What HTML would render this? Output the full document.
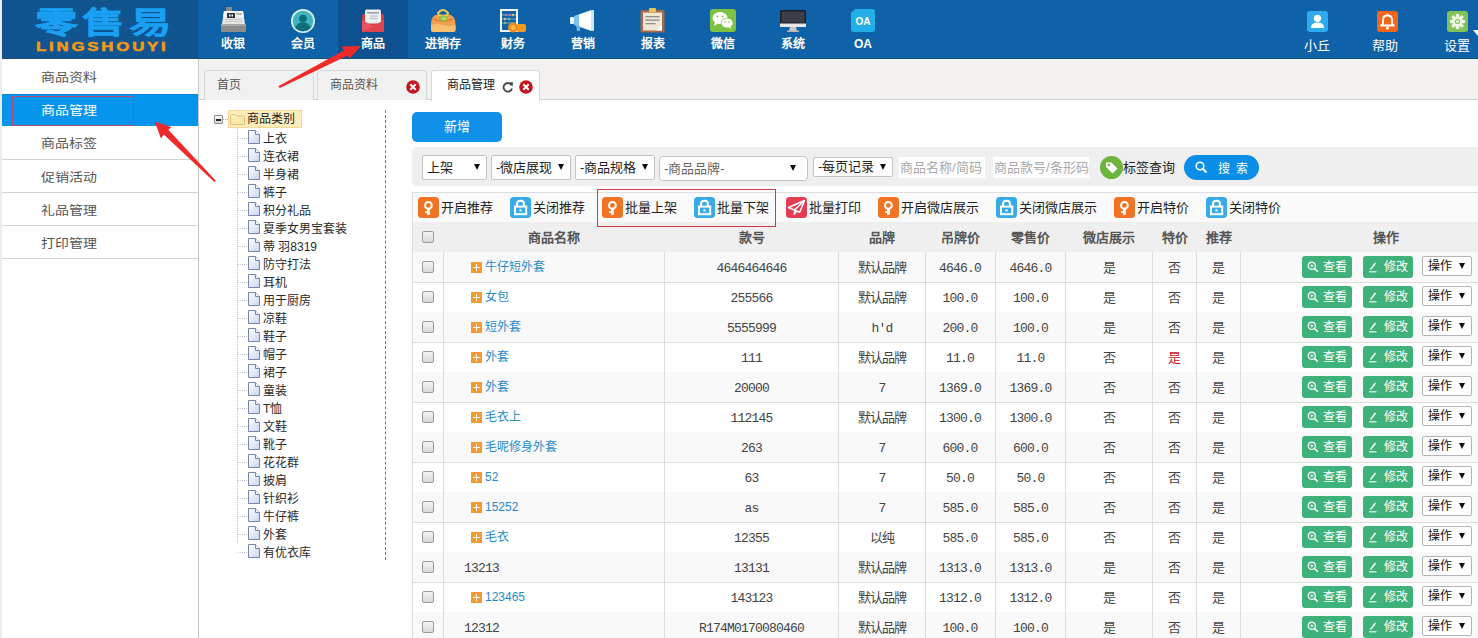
<!DOCTYPE html>
<html lang="zh-CN">
<head>
<meta charset="utf-8">
<style>
*{box-sizing:border-box;margin:0;padding:0}
html,body{width:1478px;height:638px;overflow:hidden;background:#fff;font-family:"Liberation Sans",sans-serif;font-size:13px;color:#333}
.a{position:absolute}
#hdr{position:absolute;left:2px;top:0;width:1476px;height:59px;background:#0f62a8;border-bottom:1px solid #1a4f7c}
#logo{position:absolute;left:2px;top:0;width:196px;height:58px;background:#10558f}
.nav{position:absolute;top:0;width:70px;height:58px;text-align:center;color:#fff;font-size:13px}
.nav .t{position:absolute;left:0;right:0;top:35.5px;line-height:17px;font-size:12px;font-weight:bold}
.nav svg{position:absolute}
.nav.on{background:#0e5190}
.rn{position:absolute;top:0;width:60px;height:57px;text-align:center;color:#fff;font-size:13px}
.rn .t{position:absolute;left:0;right:0;top:37px;line-height:17px}
.rn svg{position:absolute;left:19px;top:11px}
#side{position:absolute;left:0;top:59px;width:199px;height:579px;background:#fff;border-left:2px solid #ececec;border-right:1px solid #c9c9c9}
.mi{position:absolute;left:0;width:196px;height:33px;border-bottom:1px solid #d2d2d2;color:#555;font-size:14px;line-height:36px;padding-left:39px}
.mi.on{background:#0695ec;color:#fff;border-bottom:0}
#main{position:absolute;left:199px;top:58px;width:1279px;height:580px;background:#fff}
#tabbar{position:absolute;left:199px;top:59px;width:1279px;height:41px;background:linear-gradient(#e6fbfd,#eef3f6 1px,#f3f2f0 2px);border-bottom:1px solid #d0d0d0}
.tab{position:absolute;top:70px;height:30px;background:#f1f1f1;border:1px solid #d8d8d8;border-bottom:0;border-radius:3px 3px 0 0;color:#555;font-size:12px;line-height:28px}
.tab.on{background:#fff;color:#222;height:31px}
.cb{width:12px;height:12px;border:1px solid #9a9a9a;border-radius:2px;background:linear-gradient(#f4f4f4,#d8d8d8)}
.th{width:120px;text-align:center;font-size:13px;font-weight:bold;color:#555;line-height:18px;white-space:nowrap}
.td{width:160px;text-align:center;font-family:"Liberation Mono",serif;font-size:13px;letter-spacing:-0.8px;color:#444;line-height:16px;white-space:nowrap}
.lk{font-size:12px;color:#1f8bc9;line-height:18px;white-space:nowrap}
.pl{width:11px;height:11px;background:#f39b32}
.pl:before{content:"";position:absolute;left:2px;top:5px;width:7px;height:1px;background:#fff}
.pl:after{content:"";position:absolute;left:5px;top:2px;width:1px;height:7px;background:#fff}
.gb{width:50px;height:22px;background:#3fb27b;border-radius:3px;color:#fff;font-size:12px;line-height:22px;white-space:nowrap}
.op{width:50px;height:20px;background:#fff;border:1px solid #b5b5b5;border-radius:2px;font-size:12px;line-height:18px;color:#111;padding-left:5px;white-space:nowrap}
.st{display:inline-block;transform:scaleY(0.86)}
</style>
</head>
<body>
<div id="hdr"></div>
<div id="logo"></div>
<div class="a" style="left:0;top:0;width:2px;height:638px;background:#eeeeee"></div>
<div class="a" id="lg1" style="left:35px;top:5px;height:36px;color:#1aa0f2;font-weight:900;font-size:30px;line-height:36px;letter-spacing:3px;-webkit-text-stroke:0.3px #1aa0f2;white-space:nowrap;transform:scaleX(1.42);transform-origin:0 0">零售易</div>
<div class="a" id="lg2" style="left:36px;top:40px;height:14px;color:#f39a12;font-family:'Liberation Sans';font-weight:bold;font-size:12px;line-height:14px;letter-spacing:2px;-webkit-text-stroke:0.5px #f39a12;white-space:nowrap;transform:scaleX(1.4);transform-origin:0 0">LINGSHOUYI</div>

<!-- nav -->
<div class="nav" style="left:198px">
 <svg style="left:22px;top:7px" width="27" height="25" viewBox="0 0 27 25">
  <rect x="6" y="0" width="6" height="4" fill="#8a8a8a"/>
  <path d="M4 4 H23 L25 17 H2 Z" fill="#e6e6e6"/>
  <path d="M4 4 H23 L24 10 H3 Z" fill="#f4f4f4"/>
  <rect x="7" y="6" width="8" height="5" fill="#2b3340"/>
  <rect x="9" y="7.5" width="1.5" height="2" fill="#fff"/><rect x="11.5" y="7.5" width="1.5" height="2" fill="#fff"/>
  <rect x="16" y="6" width="6" height="2" fill="#bbb"/>
  <rect x="5" y="12" width="17" height="1" fill="#c9c9c9"/><rect x="5" y="14" width="17" height="1" fill="#c9c9c9"/>
  <rect x="1" y="17" width="25" height="8" fill="#8c8c8c"/>
  <rect x="1" y="17" width="25" height="2" fill="#a8a8a8"/>
 </svg>
 <div class="t">收银</div></div>
<div class="nav" style="left:268px">
 <svg style="left:23px;top:9px" width="24" height="24" viewBox="0 0 24 24">
  <circle cx="12" cy="12" r="12" fill="#d9f1f4"/>
  <circle cx="12" cy="12" r="10.3" fill="#41b4bf"/>
  <path d="M2.5 16 Q12 22 21.5 16 A10.3 10.3 0 0 1 2.5 16Z" fill="#2f9aa6"/>
  <circle cx="12" cy="9.5" r="3.8" fill="#0f6e7c"/>
  <path d="M4.5 19 Q6 14 10 13.5 L14 13.5 Q18 14 19.5 19 Q16 22.3 12 22.3 Q8 22.3 4.5 19Z" fill="#0f6e7c"/>
 </svg>
 <div class="t">会员</div></div>
<div class="nav on" style="left:338px">
 <svg style="left:23px;top:9px" width="24" height="23" viewBox="0 0 24 23">
  <path d="M1 7 Q1 5 3 5 H21 Q23 5 23 7 V21 Q23 23 21 23 H3 Q1 23 1 21Z" fill="#d63a45"/>
  <rect x="4" y="0.5" width="16" height="14" rx="1.5" fill="#eef0f2"/>
  <rect x="6" y="3" width="12" height="1.6" fill="#9aa3ad"/>
  <rect x="9" y="6.5" width="8" height="1.2" fill="#b8c0c8"/>
  <rect x="9" y="9" width="8" height="1.2" fill="#b8c0c8"/>
  <path d="M1 11 L12 17 L23 11 V21 Q23 23 21 23 H3 Q1 23 1 21Z" fill="#ef5360"/>
  <path d="M1 23 L23 12 V21 Q23 23 21 23Z" fill="#e0444f"/>
 </svg>
 <div class="t">商品</div></div>
<div class="nav" style="left:408px">
 <svg style="left:22px;top:8px" width="27" height="25" viewBox="0 0 27 25">
  <path d="M1 16 Q1 7 8 6.5 H18 Q25.5 7 25.5 16 V21.5 Q25.5 24 23 24 H3.5 Q1 24 1 21.5Z" fill="#f2a050"/>
  <path d="M1 17 Q7 15 13 17 Q19 19 25.5 17 V21.5 Q25.5 24 23 24 H3.5 Q1 24 1 21.5Z" fill="#f7c070"/>
  <path d="M3 11 Q13 15 23.5 11" stroke="#e8803e" stroke-width="2" fill="none"/>
  <path d="M8 5 Q13 -1 18 5 Q18 8 13 8 Q8 8 8 5Z" fill="none" stroke="#e8cc50" stroke-width="2"/>
  <path d="M9 9 Q13 6 18 9 Q17 14 13 14 Q9 13 9 9Z" fill="#8fbe45"/>
  <ellipse cx="14" cy="10.5" rx="2.5" ry="1.6" fill="#b6d86a"/>
 </svg>
 <div class="t">进销存</div></div>
<div class="nav" style="left:478px">
 <svg style="left:22px;top:9px" width="27" height="24" viewBox="0 0 27 24">
  <rect x="1" y="1" width="16" height="21" fill="none" stroke="#f4f6f8" stroke-width="2"/>
  <g fill="#e34a7a"><circle cx="6" cy="6" r="1.2"/><circle cx="10" cy="6" r="1.2"/></g>
  <g fill="#f3c93a"><circle cx="13" cy="6" r="1.2"/><circle cx="5" cy="10" r="1.2"/></g>
  <g fill="#66c35a"><circle cx="9" cy="10" r="1.2"/><circle cx="5" cy="14" r="1.2"/></g>
  <rect x="2" y="5.6" width="14" height="0.8" fill="#9bc"/><rect x="2" y="9.6" width="14" height="0.8" fill="#9bc"/><rect x="2" y="13.6" width="14" height="0.8" fill="#9bc"/>
  <rect x="17" y="15" width="9" height="8" rx="2" fill="#f39a1e"/>
  <circle cx="13" cy="18.5" r="5" fill="#f08a12"/>
  <circle cx="13" cy="18.5" r="2.5" fill="#f7b84a"/>
 </svg>
 <div class="t">财务</div></div>
<div class="nav" style="left:548px">
 <svg style="left:22px;top:10px" width="25" height="22" viewBox="0 0 25 22">
  <rect x="0" y="7" width="4" height="7" rx="1" fill="#eaf6fc"/>
  <path d="M4 6 L21 0 V21 L4 15Z" fill="#7cc4ec"/>
  <path d="M9 4.5 L21 0.5 V20.5 L9 16.5Z" fill="#ffffff"/>
  <rect x="21" y="0" width="3" height="21" rx="1" fill="#cbe8f7"/>
  <path d="M6 15 L10 16 L10 21 L7 21Z" fill="#6bb8e4"/>
 </svg>
 <div class="t">营销</div></div>
<div class="nav" style="left:618px">
 <svg style="left:22px;top:8px" width="25" height="25" viewBox="0 0 25 25">
  <rect x="0.5" y="2" width="24" height="22.5" rx="1.5" fill="#a8684a"/>
  <rect x="3" y="4.5" width="19" height="18" fill="#efe6d6"/>
  <rect x="9" y="0" width="7" height="4" rx="1" fill="#e8c25a"/>
  <rect x="5.5" y="8" width="14" height="1.3" fill="#8d8d8d"/>
  <rect x="5.5" y="11.5" width="14" height="1.3" fill="#8d8d8d"/>
  <rect x="5.5" y="15" width="10" height="1.3" fill="#8d8d8d"/>
  <path d="M16 22.5 L22 16.5 V22.5Z" fill="#fff"/>
 </svg>
 <div class="t">报表</div></div>
<div class="nav" style="left:688px">
 <svg style="left:22px;top:9px" width="26" height="23" viewBox="0 0 26 23">
  <rect x="0" y="0" width="26" height="23" rx="3" fill="#7dc243"/>
  <ellipse cx="10" cy="9" rx="7.5" ry="6" fill="#fff"/>
  <path d="M5 13 L4 17 L8 14.5Z" fill="#fff"/>
  <ellipse cx="17" cy="14" rx="6.3" ry="5.2" fill="#7dc243"/>
  <ellipse cx="17" cy="14" rx="5.6" ry="4.6" fill="#fff"/>
  <path d="M20 17.5 L22 20 L18.5 18.5Z" fill="#fff"/>
  <g fill="#7dc243"><circle cx="7.5" cy="7.5" r="1"/><circle cx="12.5" cy="7.5" r="1"/><circle cx="15" cy="13" r="0.8"/><circle cx="19" cy="13" r="0.8"/></g>
 </svg>
 <div class="t">微信</div></div>
<div class="nav" style="left:758px">
 <svg style="left:22px;top:10px" width="26" height="22" viewBox="0 0 26 22">
  <rect x="0" y="0" width="26" height="17" rx="1" fill="#1b1f26"/>
  <rect x="1.5" y="1.5" width="23" height="11" fill="#3a3f4a"/>
  <rect x="0" y="13.5" width="26" height="3.5" fill="#e8e8e8"/>
  <path d="M10 17 H16 L17 21 H9Z" fill="#c9c9c9"/>
  <rect x="7" y="20.5" width="12" height="1.5" fill="#b5b5b5"/>
 </svg>
 <div class="t">系统</div></div>
<div class="nav" style="left:828px">
 <svg style="left:23px;top:9px" width="24" height="23" viewBox="0 0 24 23">
  <path d="M4 0 H21 Q24 0 24 3 V20 Q24 23 21 23 H3 Q0 23 0 20 V4Z" fill="#22afe9"/>
  <text x="12" y="15.5" text-anchor="middle" font-family="Liberation Sans" font-weight="bold" font-size="10" fill="#fff">OA</text>
 </svg>
 <div class="t" style="font-family:'Liberation Sans'">OA</div></div>

<div class="rn" style="left:1288px">
 <svg width="21" height="21" viewBox="0 0 21 21"><rect width="21" height="21" rx="3" fill="#2fa9f0"/><circle cx="10.5" cy="7.3" r="3.6" fill="#fff"/><path d="M4 17 Q4 11.5 10.5 11.5 Q17 11.5 17 17Z" fill="#fff"/></svg>
 <div class="t" style="left:-1px;right:1px">小丘</div></div>
<div class="rn" style="left:1358px">
 <svg width="21" height="21" viewBox="0 0 21 21"><rect width="21" height="21" rx="3" fill="#f4661c"/><path d="M6 13 V9 Q6 4.5 10.5 4.5 Q15 4.5 15 9 V13 L17 14.5 H4 L6 13Z" fill="none" stroke="#fff" stroke-width="1.8" stroke-linejoin="round"/><circle cx="10.5" cy="17" r="1.5" fill="#fff"/><rect x="9.8" y="2.5" width="1.4" height="2" fill="#fff"/></svg>
 <div class="t" style="left:-3px;right:3px">帮助</div></div>
<div class="rn" style="left:1428px">
 <svg width="21" height="21" viewBox="0 0 21 21"><rect width="21" height="21" rx="3" fill="#80c35b"/>
 <path d="M9.2 3 H11.8 L12.3 5.3 L14.2 6.1 L16.2 4.8 L18 6.6 L16.7 8.6 L17.5 10.5 L19.8 11 V13.6 L17.5 14.1" fill="none"/>
 <g transform="translate(10.5 10.5)" fill="#eef6e6"><rect x="-1.6" y="-7.5" width="3.2" height="15"/><rect x="-1.6" y="-7.5" width="3.2" height="15" transform="rotate(45)"/><rect x="-1.6" y="-7.5" width="3.2" height="15" transform="rotate(90)"/><rect x="-1.6" y="-7.5" width="3.2" height="15" transform="rotate(135)"/><circle r="5.3"/></g>
 <circle cx="10.5" cy="10.5" r="2.6" fill="#80c35b"/><circle cx="10.5" cy="10.5" r="1.5" fill="#eef6e6"/></svg>
 <div class="t" style="left:-1px;right:1px">设置</div></div>
<div class="a" style="left:1473px;top:30px;width:0;height:0;border-left:5px solid transparent;border-right:5px solid transparent;border-top:6px solid #fff"></div>
<div id="side">
  <div class="mi" style="top:0;height:35px;line-height:39px;border-bottom:0"><span class="st">商品资料</span></div>
  <div class="mi on" style="top:35px;height:32px;line-height:32px;border-top:1px solid #0d86d8"><span class="st">商品管理</span></div>
  <div class="mi" style="top:67px;height:34px;line-height:37px"><span class="st">商品标签</span></div>
  <div class="mi" style="top:101px"><span class="st">促销活动</span></div>
  <div class="mi" style="top:134px"><span class="st">礼品管理</span></div>
  <div class="mi" style="top:167px"><span class="st">打印管理</span></div>
</div>
<div class="a" style="left:12px;top:96px;width:122px;height:30px;border:1px solid #b5487a"></div>

<div id="tabbar"></div>
<div class="tab" style="left:204px;width:110px;padding-left:12px">首页</div>
<div class="tab" style="left:317px;width:110px;padding-left:12px">商品资料
  <svg class="a" style="left:88px;top:9px" width="14" height="14" viewBox="0 0 14 14"><circle cx="7" cy="7" r="6.8" fill="#c4161f"/><path d="M4.3 4.3 L9.7 9.7 M9.7 4.3 L4.3 9.7" stroke="#fff" stroke-width="2"/></svg>
</div>
<div class="tab on" style="left:431px;width:109px;padding-left:15px">商品管理
  <svg class="a" style="left:70px;top:10px" width="12" height="12" viewBox="0 0 12 12"><path d="M9.6 4.2 A4.3 4.3 0 1 0 10 7.5" fill="none" stroke="#444" stroke-width="1.8"/><path d="M7.2 1.2 L11.2 1.4 L10.4 5.6Z" fill="#444"/></svg>
  <svg class="a" style="left:87px;top:9px" width="14" height="14" viewBox="0 0 14 14"><circle cx="7" cy="7" r="6.8" fill="#c4161f"/><path d="M4.3 4.3 L9.7 9.7 M9.7 4.3 L4.3 9.7" stroke="#fff" stroke-width="2"/></svg>
</div>

<!-- tree -->
<div class="a" style="left:385px;top:110px;width:0;height:450px;border-left:1px dashed #777"></div>
<div class="a" style="left:214px;top:115px;width:9px;height:9px;border:1px solid #8a8a8a;background:linear-gradient(#fff,#d8d8d8);border-radius:1px"><div class="a" style="left:1px;top:3px;width:5px;height:2px;background:#222"></div></div>
<div class="a" style="left:223px;top:119px;width:5px;height:0;border-top:1px dotted #aaa"></div>
<div class="a" style="left:228px;top:110px;width:74px;height:18px;background:#feecbb;border:1px solid #f5d896"></div>
<svg class="a" style="left:230px;top:114px" width="15" height="11" viewBox="0 0 15 11"><path d="M0.5 1.5 Q0.5 0.5 1.5 0.5 H5 L6 2 H13.5 Q14.5 2 14.5 3 V10.5 H0.5Z" fill="#fdf3c4" stroke="#dcc27a" stroke-width="1"/><rect x="1" y="4" width="13" height="6" fill="#fbe7a6"/></svg>
<div class="a tree" style="left:247px;top:111px;font-size:12px;line-height:16px;color:#222">商品类别</div>
<div class="a" style="left:237px;top:128px;width:0;height:415px;border-left:1px dotted #c4c4c4"></div>
<div id="tree"></div>
<div class="a" style="left:238px;top:138px;width:9px;height:0;border-top:1px dotted #c4c4c4"></div>
<svg class="a" style="left:248px;top:130px" width="12" height="14" viewBox="0 0 12 14"><defs><linearGradient id="fg" x1="0" y1="0" x2="1" y2="1"><stop offset="0" stop-color="#ffffff"/><stop offset="1" stop-color="#c9d6f0"/></linearGradient></defs><path d="M0.5 0.5 H7.5 L11.5 4.5 V13.5 H0.5Z" fill="url(#fg)" stroke="#7486b0"/><path d="M7.5 0.5 V4.5 H11.5" fill="#fff" stroke="#7486b0"/></svg>
<div class="a" style="left:263px;top:130px;font-size:12px;line-height:18px;color:#2a2a2a;white-space:nowrap">上衣</div>
<div class="a" style="left:238px;top:156px;width:9px;height:0;border-top:1px dotted #c4c4c4"></div>
<svg class="a" style="left:248px;top:148px" width="12" height="14" viewBox="0 0 12 14"><defs><linearGradient id="fg" x1="0" y1="0" x2="1" y2="1"><stop offset="0" stop-color="#ffffff"/><stop offset="1" stop-color="#c9d6f0"/></linearGradient></defs><path d="M0.5 0.5 H7.5 L11.5 4.5 V13.5 H0.5Z" fill="url(#fg)" stroke="#7486b0"/><path d="M7.5 0.5 V4.5 H11.5" fill="#fff" stroke="#7486b0"/></svg>
<div class="a" style="left:263px;top:148px;font-size:12px;line-height:18px;color:#2a2a2a;white-space:nowrap">连衣裙</div>
<div class="a" style="left:238px;top:174px;width:9px;height:0;border-top:1px dotted #c4c4c4"></div>
<svg class="a" style="left:248px;top:166px" width="12" height="14" viewBox="0 0 12 14"><defs><linearGradient id="fg" x1="0" y1="0" x2="1" y2="1"><stop offset="0" stop-color="#ffffff"/><stop offset="1" stop-color="#c9d6f0"/></linearGradient></defs><path d="M0.5 0.5 H7.5 L11.5 4.5 V13.5 H0.5Z" fill="url(#fg)" stroke="#7486b0"/><path d="M7.5 0.5 V4.5 H11.5" fill="#fff" stroke="#7486b0"/></svg>
<div class="a" style="left:263px;top:166px;font-size:12px;line-height:18px;color:#2a2a2a;white-space:nowrap">半身裙</div>
<div class="a" style="left:238px;top:192px;width:9px;height:0;border-top:1px dotted #c4c4c4"></div>
<svg class="a" style="left:248px;top:184px" width="12" height="14" viewBox="0 0 12 14"><defs><linearGradient id="fg" x1="0" y1="0" x2="1" y2="1"><stop offset="0" stop-color="#ffffff"/><stop offset="1" stop-color="#c9d6f0"/></linearGradient></defs><path d="M0.5 0.5 H7.5 L11.5 4.5 V13.5 H0.5Z" fill="url(#fg)" stroke="#7486b0"/><path d="M7.5 0.5 V4.5 H11.5" fill="#fff" stroke="#7486b0"/></svg>
<div class="a" style="left:263px;top:184px;font-size:12px;line-height:18px;color:#2a2a2a;white-space:nowrap">裤子</div>
<div class="a" style="left:238px;top:210px;width:9px;height:0;border-top:1px dotted #c4c4c4"></div>
<svg class="a" style="left:248px;top:202px" width="12" height="14" viewBox="0 0 12 14"><defs><linearGradient id="fg" x1="0" y1="0" x2="1" y2="1"><stop offset="0" stop-color="#ffffff"/><stop offset="1" stop-color="#c9d6f0"/></linearGradient></defs><path d="M0.5 0.5 H7.5 L11.5 4.5 V13.5 H0.5Z" fill="url(#fg)" stroke="#7486b0"/><path d="M7.5 0.5 V4.5 H11.5" fill="#fff" stroke="#7486b0"/></svg>
<div class="a" style="left:263px;top:202px;font-size:12px;line-height:18px;color:#2a2a2a;white-space:nowrap">积分礼品</div>
<div class="a" style="left:238px;top:228px;width:9px;height:0;border-top:1px dotted #c4c4c4"></div>
<svg class="a" style="left:248px;top:220px" width="12" height="14" viewBox="0 0 12 14"><defs><linearGradient id="fg" x1="0" y1="0" x2="1" y2="1"><stop offset="0" stop-color="#ffffff"/><stop offset="1" stop-color="#c9d6f0"/></linearGradient></defs><path d="M0.5 0.5 H7.5 L11.5 4.5 V13.5 H0.5Z" fill="url(#fg)" stroke="#7486b0"/><path d="M7.5 0.5 V4.5 H11.5" fill="#fff" stroke="#7486b0"/></svg>
<div class="a" style="left:263px;top:220px;font-size:12px;line-height:18px;color:#2a2a2a;white-space:nowrap">夏季女男宝套装</div>
<div class="a" style="left:238px;top:246px;width:9px;height:0;border-top:1px dotted #c4c4c4"></div>
<svg class="a" style="left:248px;top:238px" width="12" height="14" viewBox="0 0 12 14"><defs><linearGradient id="fg" x1="0" y1="0" x2="1" y2="1"><stop offset="0" stop-color="#ffffff"/><stop offset="1" stop-color="#c9d6f0"/></linearGradient></defs><path d="M0.5 0.5 H7.5 L11.5 4.5 V13.5 H0.5Z" fill="url(#fg)" stroke="#7486b0"/><path d="M7.5 0.5 V4.5 H11.5" fill="#fff" stroke="#7486b0"/></svg>
<div class="a" style="left:263px;top:238px;font-size:12px;line-height:18px;color:#2a2a2a;white-space:nowrap">蒂 羽8319</div>
<div class="a" style="left:238px;top:264px;width:9px;height:0;border-top:1px dotted #c4c4c4"></div>
<svg class="a" style="left:248px;top:256px" width="12" height="14" viewBox="0 0 12 14"><defs><linearGradient id="fg" x1="0" y1="0" x2="1" y2="1"><stop offset="0" stop-color="#ffffff"/><stop offset="1" stop-color="#c9d6f0"/></linearGradient></defs><path d="M0.5 0.5 H7.5 L11.5 4.5 V13.5 H0.5Z" fill="url(#fg)" stroke="#7486b0"/><path d="M7.5 0.5 V4.5 H11.5" fill="#fff" stroke="#7486b0"/></svg>
<div class="a" style="left:263px;top:256px;font-size:12px;line-height:18px;color:#2a2a2a;white-space:nowrap">防守打法</div>
<div class="a" style="left:238px;top:282px;width:9px;height:0;border-top:1px dotted #c4c4c4"></div>
<svg class="a" style="left:248px;top:274px" width="12" height="14" viewBox="0 0 12 14"><defs><linearGradient id="fg" x1="0" y1="0" x2="1" y2="1"><stop offset="0" stop-color="#ffffff"/><stop offset="1" stop-color="#c9d6f0"/></linearGradient></defs><path d="M0.5 0.5 H7.5 L11.5 4.5 V13.5 H0.5Z" fill="url(#fg)" stroke="#7486b0"/><path d="M7.5 0.5 V4.5 H11.5" fill="#fff" stroke="#7486b0"/></svg>
<div class="a" style="left:263px;top:274px;font-size:12px;line-height:18px;color:#2a2a2a;white-space:nowrap">耳机</div>
<div class="a" style="left:238px;top:300px;width:9px;height:0;border-top:1px dotted #c4c4c4"></div>
<svg class="a" style="left:248px;top:292px" width="12" height="14" viewBox="0 0 12 14"><defs><linearGradient id="fg" x1="0" y1="0" x2="1" y2="1"><stop offset="0" stop-color="#ffffff"/><stop offset="1" stop-color="#c9d6f0"/></linearGradient></defs><path d="M0.5 0.5 H7.5 L11.5 4.5 V13.5 H0.5Z" fill="url(#fg)" stroke="#7486b0"/><path d="M7.5 0.5 V4.5 H11.5" fill="#fff" stroke="#7486b0"/></svg>
<div class="a" style="left:263px;top:292px;font-size:12px;line-height:18px;color:#2a2a2a;white-space:nowrap">用于厨房</div>
<div class="a" style="left:238px;top:318px;width:9px;height:0;border-top:1px dotted #c4c4c4"></div>
<svg class="a" style="left:248px;top:310px" width="12" height="14" viewBox="0 0 12 14"><defs><linearGradient id="fg" x1="0" y1="0" x2="1" y2="1"><stop offset="0" stop-color="#ffffff"/><stop offset="1" stop-color="#c9d6f0"/></linearGradient></defs><path d="M0.5 0.5 H7.5 L11.5 4.5 V13.5 H0.5Z" fill="url(#fg)" stroke="#7486b0"/><path d="M7.5 0.5 V4.5 H11.5" fill="#fff" stroke="#7486b0"/></svg>
<div class="a" style="left:263px;top:310px;font-size:12px;line-height:18px;color:#2a2a2a;white-space:nowrap">凉鞋</div>
<div class="a" style="left:238px;top:336px;width:9px;height:0;border-top:1px dotted #c4c4c4"></div>
<svg class="a" style="left:248px;top:328px" width="12" height="14" viewBox="0 0 12 14"><defs><linearGradient id="fg" x1="0" y1="0" x2="1" y2="1"><stop offset="0" stop-color="#ffffff"/><stop offset="1" stop-color="#c9d6f0"/></linearGradient></defs><path d="M0.5 0.5 H7.5 L11.5 4.5 V13.5 H0.5Z" fill="url(#fg)" stroke="#7486b0"/><path d="M7.5 0.5 V4.5 H11.5" fill="#fff" stroke="#7486b0"/></svg>
<div class="a" style="left:263px;top:328px;font-size:12px;line-height:18px;color:#2a2a2a;white-space:nowrap">鞋子</div>
<div class="a" style="left:238px;top:354px;width:9px;height:0;border-top:1px dotted #c4c4c4"></div>
<svg class="a" style="left:248px;top:346px" width="12" height="14" viewBox="0 0 12 14"><defs><linearGradient id="fg" x1="0" y1="0" x2="1" y2="1"><stop offset="0" stop-color="#ffffff"/><stop offset="1" stop-color="#c9d6f0"/></linearGradient></defs><path d="M0.5 0.5 H7.5 L11.5 4.5 V13.5 H0.5Z" fill="url(#fg)" stroke="#7486b0"/><path d="M7.5 0.5 V4.5 H11.5" fill="#fff" stroke="#7486b0"/></svg>
<div class="a" style="left:263px;top:346px;font-size:12px;line-height:18px;color:#2a2a2a;white-space:nowrap">帽子</div>
<div class="a" style="left:238px;top:372px;width:9px;height:0;border-top:1px dotted #c4c4c4"></div>
<svg class="a" style="left:248px;top:364px" width="12" height="14" viewBox="0 0 12 14"><defs><linearGradient id="fg" x1="0" y1="0" x2="1" y2="1"><stop offset="0" stop-color="#ffffff"/><stop offset="1" stop-color="#c9d6f0"/></linearGradient></defs><path d="M0.5 0.5 H7.5 L11.5 4.5 V13.5 H0.5Z" fill="url(#fg)" stroke="#7486b0"/><path d="M7.5 0.5 V4.5 H11.5" fill="#fff" stroke="#7486b0"/></svg>
<div class="a" style="left:263px;top:364px;font-size:12px;line-height:18px;color:#2a2a2a;white-space:nowrap">裙子</div>
<div class="a" style="left:238px;top:390px;width:9px;height:0;border-top:1px dotted #c4c4c4"></div>
<svg class="a" style="left:248px;top:382px" width="12" height="14" viewBox="0 0 12 14"><defs><linearGradient id="fg" x1="0" y1="0" x2="1" y2="1"><stop offset="0" stop-color="#ffffff"/><stop offset="1" stop-color="#c9d6f0"/></linearGradient></defs><path d="M0.5 0.5 H7.5 L11.5 4.5 V13.5 H0.5Z" fill="url(#fg)" stroke="#7486b0"/><path d="M7.5 0.5 V4.5 H11.5" fill="#fff" stroke="#7486b0"/></svg>
<div class="a" style="left:263px;top:382px;font-size:12px;line-height:18px;color:#2a2a2a;white-space:nowrap">童装</div>
<div class="a" style="left:238px;top:408px;width:9px;height:0;border-top:1px dotted #c4c4c4"></div>
<svg class="a" style="left:248px;top:400px" width="12" height="14" viewBox="0 0 12 14"><defs><linearGradient id="fg" x1="0" y1="0" x2="1" y2="1"><stop offset="0" stop-color="#ffffff"/><stop offset="1" stop-color="#c9d6f0"/></linearGradient></defs><path d="M0.5 0.5 H7.5 L11.5 4.5 V13.5 H0.5Z" fill="url(#fg)" stroke="#7486b0"/><path d="M7.5 0.5 V4.5 H11.5" fill="#fff" stroke="#7486b0"/></svg>
<div class="a" style="left:263px;top:400px;font-size:12px;line-height:18px;color:#2a2a2a;white-space:nowrap">T恤</div>
<div class="a" style="left:238px;top:426px;width:9px;height:0;border-top:1px dotted #c4c4c4"></div>
<svg class="a" style="left:248px;top:418px" width="12" height="14" viewBox="0 0 12 14"><defs><linearGradient id="fg" x1="0" y1="0" x2="1" y2="1"><stop offset="0" stop-color="#ffffff"/><stop offset="1" stop-color="#c9d6f0"/></linearGradient></defs><path d="M0.5 0.5 H7.5 L11.5 4.5 V13.5 H0.5Z" fill="url(#fg)" stroke="#7486b0"/><path d="M7.5 0.5 V4.5 H11.5" fill="#fff" stroke="#7486b0"/></svg>
<div class="a" style="left:263px;top:418px;font-size:12px;line-height:18px;color:#2a2a2a;white-space:nowrap">文鞋</div>
<div class="a" style="left:238px;top:444px;width:9px;height:0;border-top:1px dotted #c4c4c4"></div>
<svg class="a" style="left:248px;top:436px" width="12" height="14" viewBox="0 0 12 14"><defs><linearGradient id="fg" x1="0" y1="0" x2="1" y2="1"><stop offset="0" stop-color="#ffffff"/><stop offset="1" stop-color="#c9d6f0"/></linearGradient></defs><path d="M0.5 0.5 H7.5 L11.5 4.5 V13.5 H0.5Z" fill="url(#fg)" stroke="#7486b0"/><path d="M7.5 0.5 V4.5 H11.5" fill="#fff" stroke="#7486b0"/></svg>
<div class="a" style="left:263px;top:436px;font-size:12px;line-height:18px;color:#2a2a2a;white-space:nowrap">靴子</div>
<div class="a" style="left:238px;top:462px;width:9px;height:0;border-top:1px dotted #c4c4c4"></div>
<svg class="a" style="left:248px;top:454px" width="12" height="14" viewBox="0 0 12 14"><defs><linearGradient id="fg" x1="0" y1="0" x2="1" y2="1"><stop offset="0" stop-color="#ffffff"/><stop offset="1" stop-color="#c9d6f0"/></linearGradient></defs><path d="M0.5 0.5 H7.5 L11.5 4.5 V13.5 H0.5Z" fill="url(#fg)" stroke="#7486b0"/><path d="M7.5 0.5 V4.5 H11.5" fill="#fff" stroke="#7486b0"/></svg>
<div class="a" style="left:263px;top:454px;font-size:12px;line-height:18px;color:#2a2a2a;white-space:nowrap">花花群</div>
<div class="a" style="left:238px;top:480px;width:9px;height:0;border-top:1px dotted #c4c4c4"></div>
<svg class="a" style="left:248px;top:472px" width="12" height="14" viewBox="0 0 12 14"><defs><linearGradient id="fg" x1="0" y1="0" x2="1" y2="1"><stop offset="0" stop-color="#ffffff"/><stop offset="1" stop-color="#c9d6f0"/></linearGradient></defs><path d="M0.5 0.5 H7.5 L11.5 4.5 V13.5 H0.5Z" fill="url(#fg)" stroke="#7486b0"/><path d="M7.5 0.5 V4.5 H11.5" fill="#fff" stroke="#7486b0"/></svg>
<div class="a" style="left:263px;top:472px;font-size:12px;line-height:18px;color:#2a2a2a;white-space:nowrap">披肩</div>
<div class="a" style="left:238px;top:498px;width:9px;height:0;border-top:1px dotted #c4c4c4"></div>
<svg class="a" style="left:248px;top:490px" width="12" height="14" viewBox="0 0 12 14"><defs><linearGradient id="fg" x1="0" y1="0" x2="1" y2="1"><stop offset="0" stop-color="#ffffff"/><stop offset="1" stop-color="#c9d6f0"/></linearGradient></defs><path d="M0.5 0.5 H7.5 L11.5 4.5 V13.5 H0.5Z" fill="url(#fg)" stroke="#7486b0"/><path d="M7.5 0.5 V4.5 H11.5" fill="#fff" stroke="#7486b0"/></svg>
<div class="a" style="left:263px;top:490px;font-size:12px;line-height:18px;color:#2a2a2a;white-space:nowrap">针织衫</div>
<div class="a" style="left:238px;top:516px;width:9px;height:0;border-top:1px dotted #c4c4c4"></div>
<svg class="a" style="left:248px;top:508px" width="12" height="14" viewBox="0 0 12 14"><defs><linearGradient id="fg" x1="0" y1="0" x2="1" y2="1"><stop offset="0" stop-color="#ffffff"/><stop offset="1" stop-color="#c9d6f0"/></linearGradient></defs><path d="M0.5 0.5 H7.5 L11.5 4.5 V13.5 H0.5Z" fill="url(#fg)" stroke="#7486b0"/><path d="M7.5 0.5 V4.5 H11.5" fill="#fff" stroke="#7486b0"/></svg>
<div class="a" style="left:263px;top:508px;font-size:12px;line-height:18px;color:#2a2a2a;white-space:nowrap">牛仔裤</div>
<div class="a" style="left:238px;top:534px;width:9px;height:0;border-top:1px dotted #c4c4c4"></div>
<svg class="a" style="left:248px;top:526px" width="12" height="14" viewBox="0 0 12 14"><defs><linearGradient id="fg" x1="0" y1="0" x2="1" y2="1"><stop offset="0" stop-color="#ffffff"/><stop offset="1" stop-color="#c9d6f0"/></linearGradient></defs><path d="M0.5 0.5 H7.5 L11.5 4.5 V13.5 H0.5Z" fill="url(#fg)" stroke="#7486b0"/><path d="M7.5 0.5 V4.5 H11.5" fill="#fff" stroke="#7486b0"/></svg>
<div class="a" style="left:263px;top:526px;font-size:12px;line-height:18px;color:#2a2a2a;white-space:nowrap">外套</div>
<div class="a" style="left:238px;top:552px;width:9px;height:0;border-top:1px dotted #c4c4c4"></div>
<svg class="a" style="left:248px;top:544px" width="12" height="14" viewBox="0 0 12 14"><defs><linearGradient id="fg" x1="0" y1="0" x2="1" y2="1"><stop offset="0" stop-color="#ffffff"/><stop offset="1" stop-color="#c9d6f0"/></linearGradient></defs><path d="M0.5 0.5 H7.5 L11.5 4.5 V13.5 H0.5Z" fill="url(#fg)" stroke="#7486b0"/><path d="M7.5 0.5 V4.5 H11.5" fill="#fff" stroke="#7486b0"/></svg>
<div class="a" style="left:263px;top:544px;font-size:12px;line-height:18px;color:#2a2a2a;white-space:nowrap">有优衣库</div>
<div class="a" style="left:412px;top:112px;width:90px;height:30px;background:#0f91e9;border-radius:5px;color:#fff;font-size:13px;line-height:30px;text-align:center">新增</div>
<div class="a" style="left:412px;top:147px;width:1066px;height:39px;background:#efefef;border-radius:5px 0 0 5px"></div>
<div class="a" style="left:422px;top:155px;width:65px;height:25px;background:#fff;border:1px solid #c4c4c4;border-radius:2px;font-size:13px;line-height:23px;color:#222;padding-left:4px;white-space:nowrap">上架<div class="a" style="left:51px;top:8px;width:0;height:0;border-left:3.5px solid transparent;border-right:3.5px solid transparent;border-top:6px solid #111"></div></div>
<div class="a" style="left:491px;top:155px;width:80px;height:25px;background:#fff;border:1px solid #c4c4c4;border-radius:2px;font-size:13px;line-height:23px;color:#222;padding-left:4px;white-space:nowrap">-微店展现<div class="a" style="left:66px;top:8px;width:0;height:0;border-left:3.5px solid transparent;border-right:3.5px solid transparent;border-top:6px solid #111"></div></div>
<div class="a" style="left:575px;top:155px;width:80px;height:25px;background:#fff;border:1px solid #c4c4c4;border-radius:2px;font-size:13px;line-height:23px;color:#222;padding-left:4px;white-space:nowrap">-商品规格<div class="a" style="left:66px;top:8px;width:0;height:0;border-left:3.5px solid transparent;border-right:3.5px solid transparent;border-top:6px solid #111"></div></div>
<div class="a" style="left:659px;top:156px;width:149px;height:25px;background:#fff;border:1px solid #c4c4c4;border-radius:4px;font-size:13px;line-height:23px;color:#666;padding-left:4px;white-space:nowrap">-商品品牌-<div class="a" style="left:130px;top:8px;width:0;height:0;border-left:3.5px solid transparent;border-right:3.5px solid transparent;border-top:6px solid #111"></div></div>
<div class="a" style="left:813px;top:157px;width:80px;height:20px;background:#fff;border:1px solid #c4c4c4;border-radius:2px;font-size:13px;line-height:18px;color:#222;padding-left:4px;white-space:nowrap">-每页记录<div class="a" style="left:66px;top:6px;width:0;height:0;border-left:3.5px solid transparent;border-right:3.5px solid transparent;border-top:6px solid #111"></div></div>
<div class="a" style="left:898px;top:156px;width:88px;height:23px;background:#fff;border:1px solid #f0f0f0;font-size:13px;line-height:22px;color:#a9a9a9;padding-left:1px;white-space:nowrap">商品名称/简码</div>
<div class="a" style="left:992px;top:156px;width:98px;height:23px;background:#fff;border:1px solid #f0f0f0;font-size:13px;line-height:22px;color:#a9a9a9;padding-left:1px;white-space:nowrap">商品款号/条形码</div>
<svg class="a" style="left:1100px;top:156px" width="23" height="23" viewBox="0 0 23 23"><circle cx="11.5" cy="11.5" r="11.5" fill="#6db43f"/><path d="M6 6.5 H11.5 L17.5 12.5 L12.5 17.5 L6 11Z" fill="#fff"/><circle cx="8.8" cy="9" r="1.3" fill="#6db43f"/></svg>
<div class="a" style="left:1123px;top:158px;font-size:13px;line-height:20px;color:#222;white-space:nowrap">标签查询</div>
<div class="a" style="left:1184px;top:155px;width:75px;height:25px;background:#0b8ee8;border-radius:13px;color:#fff;font-size:12px;line-height:25px;white-space:nowrap"><svg class="a" style="left:11px;top:6px" width="13" height="13" viewBox="0 0 13 13"><circle cx="5" cy="5" r="3.8" fill="none" stroke="#fff" stroke-width="1.6"/><path d="M7.8 7.8 L11.5 11.5" stroke="#fff" stroke-width="2"/></svg><span class="a" style="left:34px;top:1.5px;letter-spacing:5.5px">搜索</span></div>
<div class="a" style="left:412px;top:192px;width:1066px;height:30px;background:#fafafa;border-top:1px solid #dedede"></div>
<div class="a" style="left:418px;top:197px;height:21px;width:76px"><svg width="21" height="21" viewBox="0 0 21 21" style="position:absolute;left:0;top:0"><rect width="21" height="21" rx="3.5" fill="#f37324"/><circle cx="10.4" cy="8.4" r="3.4" fill="none" stroke="#fff" stroke-width="2"/><path d="M9 11.5 H11.9 V17.8 H9Z" fill="#fff"/><rect x="7" y="14.2" width="2.5" height="1.8" fill="#fff"/></svg><span class="a" style="left:23px;top:0;font-size:13px;line-height:22px;color:#222;white-space:nowrap">开启推荐</span></div>
<div class="a" style="left:510px;top:197px;height:21px;width:76px"><svg width="21" height="21" viewBox="0 0 21 21" style="position:absolute;left:0;top:0"><rect width="21" height="21" rx="3.5" fill="#37abea"/><path d="M7 10 V7.2 Q7 3.8 10.5 3.8 Q14 3.8 14 7.2 V10" fill="none" stroke="#fff" stroke-width="2"/><rect x="5" y="9.6" width="11.2" height="7.6" fill="none" stroke="#fff" stroke-width="2"/><rect x="9.4" y="12.4" width="2.2" height="2" fill="#fff"/></svg><span class="a" style="left:23px;top:0;font-size:13px;line-height:22px;color:#222;white-space:nowrap">关闭推荐</span></div>
<div class="a" style="left:602px;top:197px;height:21px;width:76px"><svg width="21" height="21" viewBox="0 0 21 21" style="position:absolute;left:0;top:0"><rect width="21" height="21" rx="3.5" fill="#f37324"/><circle cx="10.4" cy="8.4" r="3.4" fill="none" stroke="#fff" stroke-width="2"/><path d="M9 11.5 H11.9 V17.8 H9Z" fill="#fff"/><rect x="7" y="14.2" width="2.5" height="1.8" fill="#fff"/></svg><span class="a" style="left:23px;top:0;font-size:13px;line-height:22px;color:#222;white-space:nowrap">批量上架</span></div>
<div class="a" style="left:694px;top:197px;height:21px;width:76px"><svg width="21" height="21" viewBox="0 0 21 21" style="position:absolute;left:0;top:0"><rect width="21" height="21" rx="3.5" fill="#37abea"/><path d="M7 10 V7.2 Q7 3.8 10.5 3.8 Q14 3.8 14 7.2 V10" fill="none" stroke="#fff" stroke-width="2"/><rect x="5" y="9.6" width="11.2" height="7.6" fill="none" stroke="#fff" stroke-width="2"/><rect x="9.4" y="12.4" width="2.2" height="2" fill="#fff"/></svg><span class="a" style="left:23px;top:0;font-size:13px;line-height:22px;color:#222;white-space:nowrap">批量下架</span></div>
<div class="a" style="left:786px;top:197px;height:21px;width:76px"><svg width="21" height="21" viewBox="0 0 21 21" style="position:absolute;left:0;top:0"><rect width="21" height="21" rx="3.5" fill="#e43d53"/><path d="M2.5 10.5 L18.5 3.5 L13.7 15.3 Z" fill="none" stroke="#fff" stroke-width="1.5" stroke-linejoin="round"/><path d="M18.5 3.5 L9 12.5 L8.2 17.2 L11 13.8" fill="none" stroke="#fff" stroke-width="1.5" stroke-linejoin="round"/></svg><span class="a" style="left:23px;top:0;font-size:13px;line-height:22px;color:#222;white-space:nowrap">批量打印</span></div>
<div class="a" style="left:878px;top:197px;height:21px;width:102px"><svg width="21" height="21" viewBox="0 0 21 21" style="position:absolute;left:0;top:0"><rect width="21" height="21" rx="3.5" fill="#f37324"/><circle cx="10.4" cy="8.4" r="3.4" fill="none" stroke="#fff" stroke-width="2"/><path d="M9 11.5 H11.9 V17.8 H9Z" fill="#fff"/><rect x="7" y="14.2" width="2.5" height="1.8" fill="#fff"/></svg><span class="a" style="left:23px;top:0;font-size:13px;line-height:22px;color:#222;white-space:nowrap">开启微店展示</span></div>
<div class="a" style="left:996px;top:197px;height:21px;width:102px"><svg width="21" height="21" viewBox="0 0 21 21" style="position:absolute;left:0;top:0"><rect width="21" height="21" rx="3.5" fill="#37abea"/><path d="M7 10 V7.2 Q7 3.8 10.5 3.8 Q14 3.8 14 7.2 V10" fill="none" stroke="#fff" stroke-width="2"/><rect x="5" y="9.6" width="11.2" height="7.6" fill="none" stroke="#fff" stroke-width="2"/><rect x="9.4" y="12.4" width="2.2" height="2" fill="#fff"/></svg><span class="a" style="left:23px;top:0;font-size:13px;line-height:22px;color:#222;white-space:nowrap">关闭微店展示</span></div>
<div class="a" style="left:1114px;top:197px;height:21px;width:76px"><svg width="21" height="21" viewBox="0 0 21 21" style="position:absolute;left:0;top:0"><rect width="21" height="21" rx="3.5" fill="#f37324"/><circle cx="10.4" cy="8.4" r="3.4" fill="none" stroke="#fff" stroke-width="2"/><path d="M9 11.5 H11.9 V17.8 H9Z" fill="#fff"/><rect x="7" y="14.2" width="2.5" height="1.8" fill="#fff"/></svg><span class="a" style="left:23px;top:0;font-size:13px;line-height:22px;color:#222;white-space:nowrap">开启特价</span></div>
<div class="a" style="left:1206px;top:197px;height:21px;width:76px"><svg width="21" height="21" viewBox="0 0 21 21" style="position:absolute;left:0;top:0"><rect width="21" height="21" rx="3.5" fill="#37abea"/><path d="M7 10 V7.2 Q7 3.8 10.5 3.8 Q14 3.8 14 7.2 V10" fill="none" stroke="#fff" stroke-width="2"/><rect x="5" y="9.6" width="11.2" height="7.6" fill="none" stroke="#fff" stroke-width="2"/><rect x="9.4" y="12.4" width="2.2" height="2" fill="#fff"/></svg><span class="a" style="left:23px;top:0;font-size:13px;line-height:22px;color:#222;white-space:nowrap">关闭特价</span></div>
<div class="a" style="left:412px;top:222px;width:1066px;height:30px;background:#efefef"></div>
<div class="a cb" style="left:422px;top:231px"></div>
<div class="a th" style="left:494px;top:229px">商品名称</div>
<div class="a th" style="left:691.5px;top:229px">款号</div>
<div class="a th" style="left:822px;top:229px">品牌</div>
<div class="a th" style="left:900px;top:229px">吊牌价</div>
<div class="a th" style="left:970.5px;top:229px">零售价</div>
<div class="a th" style="left:1049px;top:229px">微店展示</div>
<div class="a th" style="left:1115px;top:229px">特价</div>
<div class="a th" style="left:1158.5px;top:229px">推荐</div>
<div class="a th" style="left:1325.5px;top:229px">操作</div>
<div class="a" style="left:412px;top:252px;width:1066px;height:30px;background:#f9f9f9"></div>
<div class="a" style="left:412px;top:282px;width:1066px;height:1px;background:#dddddd"></div>
<div class="a" style="left:412px;top:312px;width:1066px;height:1px;background:#dddddd"></div>
<div class="a" style="left:412px;top:312px;width:1066px;height:30px;background:#f9f9f9"></div>
<div class="a" style="left:412px;top:342px;width:1066px;height:1px;background:#dddddd"></div>
<div class="a" style="left:412px;top:372px;width:1066px;height:1px;background:#dddddd"></div>
<div class="a" style="left:412px;top:372px;width:1066px;height:30px;background:#f9f9f9"></div>
<div class="a" style="left:412px;top:402px;width:1066px;height:1px;background:#dddddd"></div>
<div class="a" style="left:412px;top:432px;width:1066px;height:1px;background:#dddddd"></div>
<div class="a" style="left:412px;top:432px;width:1066px;height:30px;background:#f9f9f9"></div>
<div class="a" style="left:412px;top:462px;width:1066px;height:1px;background:#dddddd"></div>
<div class="a" style="left:412px;top:492px;width:1066px;height:1px;background:#dddddd"></div>
<div class="a" style="left:412px;top:492px;width:1066px;height:30px;background:#f9f9f9"></div>
<div class="a" style="left:412px;top:522px;width:1066px;height:1px;background:#dddddd"></div>
<div class="a" style="left:412px;top:552px;width:1066px;height:1px;background:#dddddd"></div>
<div class="a" style="left:412px;top:552px;width:1066px;height:30px;background:#f9f9f9"></div>
<div class="a" style="left:412px;top:582px;width:1066px;height:1px;background:#dddddd"></div>
<div class="a" style="left:412px;top:612px;width:1066px;height:1px;background:#dddddd"></div>
<div class="a" style="left:412px;top:612px;width:1066px;height:30px;background:#f9f9f9"></div>
<div class="a" style="left:412px;top:642px;width:1066px;height:1px;background:#dddddd"></div>
<div class="a" style="left:412px;top:192px;width:1px;height:446px;background:#dddddd"></div>
<div class="a" style="left:443px;top:252px;width:1px;height:386px;background:#dddddd"></div>
<div class="a" style="left:664px;top:252px;width:1px;height:386px;background:#dddddd"></div>
<div class="a" style="left:838px;top:252px;width:1px;height:386px;background:#dddddd"></div>
<div class="a" style="left:925px;top:252px;width:1px;height:386px;background:#dddddd"></div>
<div class="a" style="left:995px;top:252px;width:1px;height:386px;background:#dddddd"></div>
<div class="a" style="left:1065px;top:252px;width:1px;height:386px;background:#dddddd"></div>
<div class="a" style="left:1152px;top:252px;width:1px;height:386px;background:#dddddd"></div>
<div class="a" style="left:1196px;top:252px;width:1px;height:386px;background:#dddddd"></div>
<div class="a" style="left:1240px;top:252px;width:1px;height:386px;background:#dddddd"></div>
<div class="a cb" style="left:422px;top:261px"></div>
<div class="a pl" style="left:471px;top:262px"></div>
<div class="a lk" style="left:485px;top:258px">牛仔短外套</div>
<div class="a td" style="left:671.5px;top:261px">4646464646</div>
<div class="a td" style="left:802px;top:261px">默认品牌</div>
<div class="a td" style="left:880px;top:261px">4646.0</div>
<div class="a td" style="left:950.5px;top:261px">4646.0</div>
<div class="a td" style="left:1029px;top:261px">是</div>
<div class="a td" style="left:1094px;top:261px">否</div>
<div class="a td" style="left:1138.5px;top:261px">是</div>
<div class="a gb" style="left:1302px;top:256px"><svg class="a" style="left:5px;top:5px" width="12" height="12" viewBox="0 0 12 12"><circle cx="4.8" cy="4.8" r="3.6" fill="none" stroke="#fff" stroke-width="1.2"/><path d="M7.4 7.4 L10.8 10.8" stroke="#fff" stroke-width="1.6"/><path d="M3.2 4.8 H6.4 M4.8 3.2 V6.4" stroke="#fff" stroke-width="0.9"/></svg><span class="a" style="left:21px;top:0">查看</span></div>
<div class="a gb" style="left:1363px;top:256px"><svg class="a" style="left:5px;top:5px" width="12" height="12" viewBox="0 0 12 12"><path d="M2.5 8.5 L7.5 2" stroke="#fff" stroke-width="1.4"/><path d="M1 10.8 H8.5" stroke="#fff" stroke-width="1.1"/></svg><span class="a" style="left:21px;top:0">修改</span></div>
<div class="a op" style="left:1422px;top:256px">操作<div class="a" style="left:36px;top:6px;width:0;height:0;border-left:3.5px solid transparent;border-right:3.5px solid transparent;border-top:6px solid #111"></div></div>
<div class="a cb" style="left:422px;top:291px"></div>
<div class="a pl" style="left:471px;top:292px"></div>
<div class="a lk" style="left:485px;top:288px">女包</div>
<div class="a td" style="left:671.5px;top:291px">255566</div>
<div class="a td" style="left:802px;top:291px">默认品牌</div>
<div class="a td" style="left:880px;top:291px">100.0</div>
<div class="a td" style="left:950.5px;top:291px">100.0</div>
<div class="a td" style="left:1029px;top:291px">是</div>
<div class="a td" style="left:1094px;top:291px">否</div>
<div class="a td" style="left:1138.5px;top:291px">是</div>
<div class="a gb" style="left:1302px;top:286px"><svg class="a" style="left:5px;top:5px" width="12" height="12" viewBox="0 0 12 12"><circle cx="4.8" cy="4.8" r="3.6" fill="none" stroke="#fff" stroke-width="1.2"/><path d="M7.4 7.4 L10.8 10.8" stroke="#fff" stroke-width="1.6"/><path d="M3.2 4.8 H6.4 M4.8 3.2 V6.4" stroke="#fff" stroke-width="0.9"/></svg><span class="a" style="left:21px;top:0">查看</span></div>
<div class="a gb" style="left:1363px;top:286px"><svg class="a" style="left:5px;top:5px" width="12" height="12" viewBox="0 0 12 12"><path d="M2.5 8.5 L7.5 2" stroke="#fff" stroke-width="1.4"/><path d="M1 10.8 H8.5" stroke="#fff" stroke-width="1.1"/></svg><span class="a" style="left:21px;top:0">修改</span></div>
<div class="a op" style="left:1422px;top:286px">操作<div class="a" style="left:36px;top:6px;width:0;height:0;border-left:3.5px solid transparent;border-right:3.5px solid transparent;border-top:6px solid #111"></div></div>
<div class="a cb" style="left:422px;top:321px"></div>
<div class="a pl" style="left:471px;top:322px"></div>
<div class="a lk" style="left:485px;top:318px">短外套</div>
<div class="a td" style="left:671.5px;top:321px">5555999</div>
<div class="a td" style="left:802px;top:321px">h'd</div>
<div class="a td" style="left:880px;top:321px">200.0</div>
<div class="a td" style="left:950.5px;top:321px">100.0</div>
<div class="a td" style="left:1029px;top:321px">是</div>
<div class="a td" style="left:1094px;top:321px">否</div>
<div class="a td" style="left:1138.5px;top:321px">是</div>
<div class="a gb" style="left:1302px;top:316px"><svg class="a" style="left:5px;top:5px" width="12" height="12" viewBox="0 0 12 12"><circle cx="4.8" cy="4.8" r="3.6" fill="none" stroke="#fff" stroke-width="1.2"/><path d="M7.4 7.4 L10.8 10.8" stroke="#fff" stroke-width="1.6"/><path d="M3.2 4.8 H6.4 M4.8 3.2 V6.4" stroke="#fff" stroke-width="0.9"/></svg><span class="a" style="left:21px;top:0">查看</span></div>
<div class="a gb" style="left:1363px;top:316px"><svg class="a" style="left:5px;top:5px" width="12" height="12" viewBox="0 0 12 12"><path d="M2.5 8.5 L7.5 2" stroke="#fff" stroke-width="1.4"/><path d="M1 10.8 H8.5" stroke="#fff" stroke-width="1.1"/></svg><span class="a" style="left:21px;top:0">修改</span></div>
<div class="a op" style="left:1422px;top:316px">操作<div class="a" style="left:36px;top:6px;width:0;height:0;border-left:3.5px solid transparent;border-right:3.5px solid transparent;border-top:6px solid #111"></div></div>
<div class="a cb" style="left:422px;top:351px"></div>
<div class="a pl" style="left:471px;top:352px"></div>
<div class="a lk" style="left:485px;top:348px">外套</div>
<div class="a td" style="left:671.5px;top:351px">111</div>
<div class="a td" style="left:802px;top:351px">默认品牌</div>
<div class="a td" style="left:880px;top:351px">11.0</div>
<div class="a td" style="left:950.5px;top:351px">11.0</div>
<div class="a td" style="left:1029px;top:351px">否</div>
<div class="a td" style="left:1094px;top:351px;color:#d0121b">是</div>
<div class="a td" style="left:1138.5px;top:351px">是</div>
<div class="a gb" style="left:1302px;top:346px"><svg class="a" style="left:5px;top:5px" width="12" height="12" viewBox="0 0 12 12"><circle cx="4.8" cy="4.8" r="3.6" fill="none" stroke="#fff" stroke-width="1.2"/><path d="M7.4 7.4 L10.8 10.8" stroke="#fff" stroke-width="1.6"/><path d="M3.2 4.8 H6.4 M4.8 3.2 V6.4" stroke="#fff" stroke-width="0.9"/></svg><span class="a" style="left:21px;top:0">查看</span></div>
<div class="a gb" style="left:1363px;top:346px"><svg class="a" style="left:5px;top:5px" width="12" height="12" viewBox="0 0 12 12"><path d="M2.5 8.5 L7.5 2" stroke="#fff" stroke-width="1.4"/><path d="M1 10.8 H8.5" stroke="#fff" stroke-width="1.1"/></svg><span class="a" style="left:21px;top:0">修改</span></div>
<div class="a op" style="left:1422px;top:346px">操作<div class="a" style="left:36px;top:6px;width:0;height:0;border-left:3.5px solid transparent;border-right:3.5px solid transparent;border-top:6px solid #111"></div></div>
<div class="a cb" style="left:422px;top:381px"></div>
<div class="a pl" style="left:471px;top:382px"></div>
<div class="a lk" style="left:485px;top:378px">外套</div>
<div class="a td" style="left:671.5px;top:381px">20000</div>
<div class="a td" style="left:802px;top:381px">7</div>
<div class="a td" style="left:880px;top:381px">1369.0</div>
<div class="a td" style="left:950.5px;top:381px">1369.0</div>
<div class="a td" style="left:1029px;top:381px">否</div>
<div class="a td" style="left:1094px;top:381px">否</div>
<div class="a td" style="left:1138.5px;top:381px">是</div>
<div class="a gb" style="left:1302px;top:376px"><svg class="a" style="left:5px;top:5px" width="12" height="12" viewBox="0 0 12 12"><circle cx="4.8" cy="4.8" r="3.6" fill="none" stroke="#fff" stroke-width="1.2"/><path d="M7.4 7.4 L10.8 10.8" stroke="#fff" stroke-width="1.6"/><path d="M3.2 4.8 H6.4 M4.8 3.2 V6.4" stroke="#fff" stroke-width="0.9"/></svg><span class="a" style="left:21px;top:0">查看</span></div>
<div class="a gb" style="left:1363px;top:376px"><svg class="a" style="left:5px;top:5px" width="12" height="12" viewBox="0 0 12 12"><path d="M2.5 8.5 L7.5 2" stroke="#fff" stroke-width="1.4"/><path d="M1 10.8 H8.5" stroke="#fff" stroke-width="1.1"/></svg><span class="a" style="left:21px;top:0">修改</span></div>
<div class="a op" style="left:1422px;top:376px">操作<div class="a" style="left:36px;top:6px;width:0;height:0;border-left:3.5px solid transparent;border-right:3.5px solid transparent;border-top:6px solid #111"></div></div>
<div class="a cb" style="left:422px;top:411px"></div>
<div class="a pl" style="left:471px;top:412px"></div>
<div class="a lk" style="left:485px;top:408px">毛衣上</div>
<div class="a td" style="left:671.5px;top:411px">112145</div>
<div class="a td" style="left:802px;top:411px">默认品牌</div>
<div class="a td" style="left:880px;top:411px">1300.0</div>
<div class="a td" style="left:950.5px;top:411px">1300.0</div>
<div class="a td" style="left:1029px;top:411px">否</div>
<div class="a td" style="left:1094px;top:411px">否</div>
<div class="a td" style="left:1138.5px;top:411px">是</div>
<div class="a gb" style="left:1302px;top:406px"><svg class="a" style="left:5px;top:5px" width="12" height="12" viewBox="0 0 12 12"><circle cx="4.8" cy="4.8" r="3.6" fill="none" stroke="#fff" stroke-width="1.2"/><path d="M7.4 7.4 L10.8 10.8" stroke="#fff" stroke-width="1.6"/><path d="M3.2 4.8 H6.4 M4.8 3.2 V6.4" stroke="#fff" stroke-width="0.9"/></svg><span class="a" style="left:21px;top:0">查看</span></div>
<div class="a gb" style="left:1363px;top:406px"><svg class="a" style="left:5px;top:5px" width="12" height="12" viewBox="0 0 12 12"><path d="M2.5 8.5 L7.5 2" stroke="#fff" stroke-width="1.4"/><path d="M1 10.8 H8.5" stroke="#fff" stroke-width="1.1"/></svg><span class="a" style="left:21px;top:0">修改</span></div>
<div class="a op" style="left:1422px;top:406px">操作<div class="a" style="left:36px;top:6px;width:0;height:0;border-left:3.5px solid transparent;border-right:3.5px solid transparent;border-top:6px solid #111"></div></div>
<div class="a cb" style="left:422px;top:441px"></div>
<div class="a pl" style="left:471px;top:442px"></div>
<div class="a lk" style="left:485px;top:438px">毛呢修身外套</div>
<div class="a td" style="left:671.5px;top:441px">263</div>
<div class="a td" style="left:802px;top:441px">7</div>
<div class="a td" style="left:880px;top:441px">600.0</div>
<div class="a td" style="left:950.5px;top:441px">600.0</div>
<div class="a td" style="left:1029px;top:441px">否</div>
<div class="a td" style="left:1094px;top:441px">否</div>
<div class="a td" style="left:1138.5px;top:441px">是</div>
<div class="a gb" style="left:1302px;top:436px"><svg class="a" style="left:5px;top:5px" width="12" height="12" viewBox="0 0 12 12"><circle cx="4.8" cy="4.8" r="3.6" fill="none" stroke="#fff" stroke-width="1.2"/><path d="M7.4 7.4 L10.8 10.8" stroke="#fff" stroke-width="1.6"/><path d="M3.2 4.8 H6.4 M4.8 3.2 V6.4" stroke="#fff" stroke-width="0.9"/></svg><span class="a" style="left:21px;top:0">查看</span></div>
<div class="a gb" style="left:1363px;top:436px"><svg class="a" style="left:5px;top:5px" width="12" height="12" viewBox="0 0 12 12"><path d="M2.5 8.5 L7.5 2" stroke="#fff" stroke-width="1.4"/><path d="M1 10.8 H8.5" stroke="#fff" stroke-width="1.1"/></svg><span class="a" style="left:21px;top:0">修改</span></div>
<div class="a op" style="left:1422px;top:436px">操作<div class="a" style="left:36px;top:6px;width:0;height:0;border-left:3.5px solid transparent;border-right:3.5px solid transparent;border-top:6px solid #111"></div></div>
<div class="a cb" style="left:422px;top:471px"></div>
<div class="a pl" style="left:471px;top:472px"></div>
<div class="a lk" style="left:485px;top:468px">52</div>
<div class="a td" style="left:671.5px;top:471px">63</div>
<div class="a td" style="left:802px;top:471px">7</div>
<div class="a td" style="left:880px;top:471px">50.0</div>
<div class="a td" style="left:950.5px;top:471px">50.0</div>
<div class="a td" style="left:1029px;top:471px">否</div>
<div class="a td" style="left:1094px;top:471px">否</div>
<div class="a td" style="left:1138.5px;top:471px">是</div>
<div class="a gb" style="left:1302px;top:466px"><svg class="a" style="left:5px;top:5px" width="12" height="12" viewBox="0 0 12 12"><circle cx="4.8" cy="4.8" r="3.6" fill="none" stroke="#fff" stroke-width="1.2"/><path d="M7.4 7.4 L10.8 10.8" stroke="#fff" stroke-width="1.6"/><path d="M3.2 4.8 H6.4 M4.8 3.2 V6.4" stroke="#fff" stroke-width="0.9"/></svg><span class="a" style="left:21px;top:0">查看</span></div>
<div class="a gb" style="left:1363px;top:466px"><svg class="a" style="left:5px;top:5px" width="12" height="12" viewBox="0 0 12 12"><path d="M2.5 8.5 L7.5 2" stroke="#fff" stroke-width="1.4"/><path d="M1 10.8 H8.5" stroke="#fff" stroke-width="1.1"/></svg><span class="a" style="left:21px;top:0">修改</span></div>
<div class="a op" style="left:1422px;top:466px">操作<div class="a" style="left:36px;top:6px;width:0;height:0;border-left:3.5px solid transparent;border-right:3.5px solid transparent;border-top:6px solid #111"></div></div>
<div class="a cb" style="left:422px;top:501px"></div>
<div class="a pl" style="left:471px;top:502px"></div>
<div class="a lk" style="left:485px;top:498px">15252</div>
<div class="a td" style="left:671.5px;top:501px">as</div>
<div class="a td" style="left:802px;top:501px">7</div>
<div class="a td" style="left:880px;top:501px">585.0</div>
<div class="a td" style="left:950.5px;top:501px">585.0</div>
<div class="a td" style="left:1029px;top:501px">否</div>
<div class="a td" style="left:1094px;top:501px">否</div>
<div class="a td" style="left:1138.5px;top:501px">是</div>
<div class="a gb" style="left:1302px;top:496px"><svg class="a" style="left:5px;top:5px" width="12" height="12" viewBox="0 0 12 12"><circle cx="4.8" cy="4.8" r="3.6" fill="none" stroke="#fff" stroke-width="1.2"/><path d="M7.4 7.4 L10.8 10.8" stroke="#fff" stroke-width="1.6"/><path d="M3.2 4.8 H6.4 M4.8 3.2 V6.4" stroke="#fff" stroke-width="0.9"/></svg><span class="a" style="left:21px;top:0">查看</span></div>
<div class="a gb" style="left:1363px;top:496px"><svg class="a" style="left:5px;top:5px" width="12" height="12" viewBox="0 0 12 12"><path d="M2.5 8.5 L7.5 2" stroke="#fff" stroke-width="1.4"/><path d="M1 10.8 H8.5" stroke="#fff" stroke-width="1.1"/></svg><span class="a" style="left:21px;top:0">修改</span></div>
<div class="a op" style="left:1422px;top:496px">操作<div class="a" style="left:36px;top:6px;width:0;height:0;border-left:3.5px solid transparent;border-right:3.5px solid transparent;border-top:6px solid #111"></div></div>
<div class="a cb" style="left:422px;top:531px"></div>
<div class="a pl" style="left:471px;top:532px"></div>
<div class="a lk" style="left:485px;top:528px">毛衣</div>
<div class="a td" style="left:671.5px;top:531px">12355</div>
<div class="a td" style="left:802px;top:531px">以纯</div>
<div class="a td" style="left:880px;top:531px">585.0</div>
<div class="a td" style="left:950.5px;top:531px">585.0</div>
<div class="a td" style="left:1029px;top:531px">否</div>
<div class="a td" style="left:1094px;top:531px">否</div>
<div class="a td" style="left:1138.5px;top:531px">是</div>
<div class="a gb" style="left:1302px;top:526px"><svg class="a" style="left:5px;top:5px" width="12" height="12" viewBox="0 0 12 12"><circle cx="4.8" cy="4.8" r="3.6" fill="none" stroke="#fff" stroke-width="1.2"/><path d="M7.4 7.4 L10.8 10.8" stroke="#fff" stroke-width="1.6"/><path d="M3.2 4.8 H6.4 M4.8 3.2 V6.4" stroke="#fff" stroke-width="0.9"/></svg><span class="a" style="left:21px;top:0">查看</span></div>
<div class="a gb" style="left:1363px;top:526px"><svg class="a" style="left:5px;top:5px" width="12" height="12" viewBox="0 0 12 12"><path d="M2.5 8.5 L7.5 2" stroke="#fff" stroke-width="1.4"/><path d="M1 10.8 H8.5" stroke="#fff" stroke-width="1.1"/></svg><span class="a" style="left:21px;top:0">修改</span></div>
<div class="a op" style="left:1422px;top:526px">操作<div class="a" style="left:36px;top:6px;width:0;height:0;border-left:3.5px solid transparent;border-right:3.5px solid transparent;border-top:6px solid #111"></div></div>
<div class="a cb" style="left:422px;top:561px"></div>
<div class="a td" style="left:464px;top:561px;text-align:left;width:auto">13213</div>
<div class="a td" style="left:671.5px;top:561px">13131</div>
<div class="a td" style="left:802px;top:561px">默认品牌</div>
<div class="a td" style="left:880px;top:561px">1313.0</div>
<div class="a td" style="left:950.5px;top:561px">1313.0</div>
<div class="a td" style="left:1029px;top:561px">是</div>
<div class="a td" style="left:1094px;top:561px">否</div>
<div class="a td" style="left:1138.5px;top:561px">是</div>
<div class="a gb" style="left:1302px;top:556px"><svg class="a" style="left:5px;top:5px" width="12" height="12" viewBox="0 0 12 12"><circle cx="4.8" cy="4.8" r="3.6" fill="none" stroke="#fff" stroke-width="1.2"/><path d="M7.4 7.4 L10.8 10.8" stroke="#fff" stroke-width="1.6"/><path d="M3.2 4.8 H6.4 M4.8 3.2 V6.4" stroke="#fff" stroke-width="0.9"/></svg><span class="a" style="left:21px;top:0">查看</span></div>
<div class="a gb" style="left:1363px;top:556px"><svg class="a" style="left:5px;top:5px" width="12" height="12" viewBox="0 0 12 12"><path d="M2.5 8.5 L7.5 2" stroke="#fff" stroke-width="1.4"/><path d="M1 10.8 H8.5" stroke="#fff" stroke-width="1.1"/></svg><span class="a" style="left:21px;top:0">修改</span></div>
<div class="a op" style="left:1422px;top:556px">操作<div class="a" style="left:36px;top:6px;width:0;height:0;border-left:3.5px solid transparent;border-right:3.5px solid transparent;border-top:6px solid #111"></div></div>
<div class="a cb" style="left:422px;top:591px"></div>
<div class="a pl" style="left:471px;top:592px"></div>
<div class="a lk" style="left:485px;top:588px">123465</div>
<div class="a td" style="left:671.5px;top:591px">143123</div>
<div class="a td" style="left:802px;top:591px">默认品牌</div>
<div class="a td" style="left:880px;top:591px">1312.0</div>
<div class="a td" style="left:950.5px;top:591px">1312.0</div>
<div class="a td" style="left:1029px;top:591px">是</div>
<div class="a td" style="left:1094px;top:591px">否</div>
<div class="a td" style="left:1138.5px;top:591px">是</div>
<div class="a gb" style="left:1302px;top:586px"><svg class="a" style="left:5px;top:5px" width="12" height="12" viewBox="0 0 12 12"><circle cx="4.8" cy="4.8" r="3.6" fill="none" stroke="#fff" stroke-width="1.2"/><path d="M7.4 7.4 L10.8 10.8" stroke="#fff" stroke-width="1.6"/><path d="M3.2 4.8 H6.4 M4.8 3.2 V6.4" stroke="#fff" stroke-width="0.9"/></svg><span class="a" style="left:21px;top:0">查看</span></div>
<div class="a gb" style="left:1363px;top:586px"><svg class="a" style="left:5px;top:5px" width="12" height="12" viewBox="0 0 12 12"><path d="M2.5 8.5 L7.5 2" stroke="#fff" stroke-width="1.4"/><path d="M1 10.8 H8.5" stroke="#fff" stroke-width="1.1"/></svg><span class="a" style="left:21px;top:0">修改</span></div>
<div class="a op" style="left:1422px;top:586px">操作<div class="a" style="left:36px;top:6px;width:0;height:0;border-left:3.5px solid transparent;border-right:3.5px solid transparent;border-top:6px solid #111"></div></div>
<div class="a cb" style="left:422px;top:621px"></div>
<div class="a td" style="left:464px;top:621px;text-align:left;width:auto">12312</div>
<div class="a td" style="left:671.5px;top:621px">R174M0170080460</div>
<div class="a td" style="left:802px;top:621px">默认品牌</div>
<div class="a td" style="left:880px;top:621px">100.0</div>
<div class="a td" style="left:950.5px;top:621px">100.0</div>
<div class="a td" style="left:1029px;top:621px">是</div>
<div class="a td" style="left:1094px;top:621px">否</div>
<div class="a td" style="left:1138.5px;top:621px">是</div>
<div class="a gb" style="left:1302px;top:616px"><svg class="a" style="left:5px;top:5px" width="12" height="12" viewBox="0 0 12 12"><circle cx="4.8" cy="4.8" r="3.6" fill="none" stroke="#fff" stroke-width="1.2"/><path d="M7.4 7.4 L10.8 10.8" stroke="#fff" stroke-width="1.6"/><path d="M3.2 4.8 H6.4 M4.8 3.2 V6.4" stroke="#fff" stroke-width="0.9"/></svg><span class="a" style="left:21px;top:0">查看</span></div>
<div class="a gb" style="left:1363px;top:616px"><svg class="a" style="left:5px;top:5px" width="12" height="12" viewBox="0 0 12 12"><path d="M2.5 8.5 L7.5 2" stroke="#fff" stroke-width="1.4"/><path d="M1 10.8 H8.5" stroke="#fff" stroke-width="1.1"/></svg><span class="a" style="left:21px;top:0">修改</span></div>
<div class="a op" style="left:1422px;top:616px">操作<div class="a" style="left:36px;top:6px;width:0;height:0;border-left:3.5px solid transparent;border-right:3.5px solid transparent;border-top:6px solid #111"></div></div>
<div class="a" style="left:597px;top:189px;width:179px;height:38px;border:1px solid #cc3a48"></div>
<svg class="a" style="left:0;top:0" width="1478" height="638" viewBox="0 0 1478 638">
 <path d="M278.3 86.2 L343.8 50.6 L341.6 46.5 L361 46 L349.6 58.6 L347.8 55.4 L279.8 87.9 Z" fill="#ee2a2a"/>
 <path d="M154.8 121.6 L171.3 126.9 L168.3 129.8 L215.6 180.6 L214.3 181.9 L163.8 134.4 L160.9 138.6 Z" fill="#ee2a2a"/>
</svg>
</body>
</html>
